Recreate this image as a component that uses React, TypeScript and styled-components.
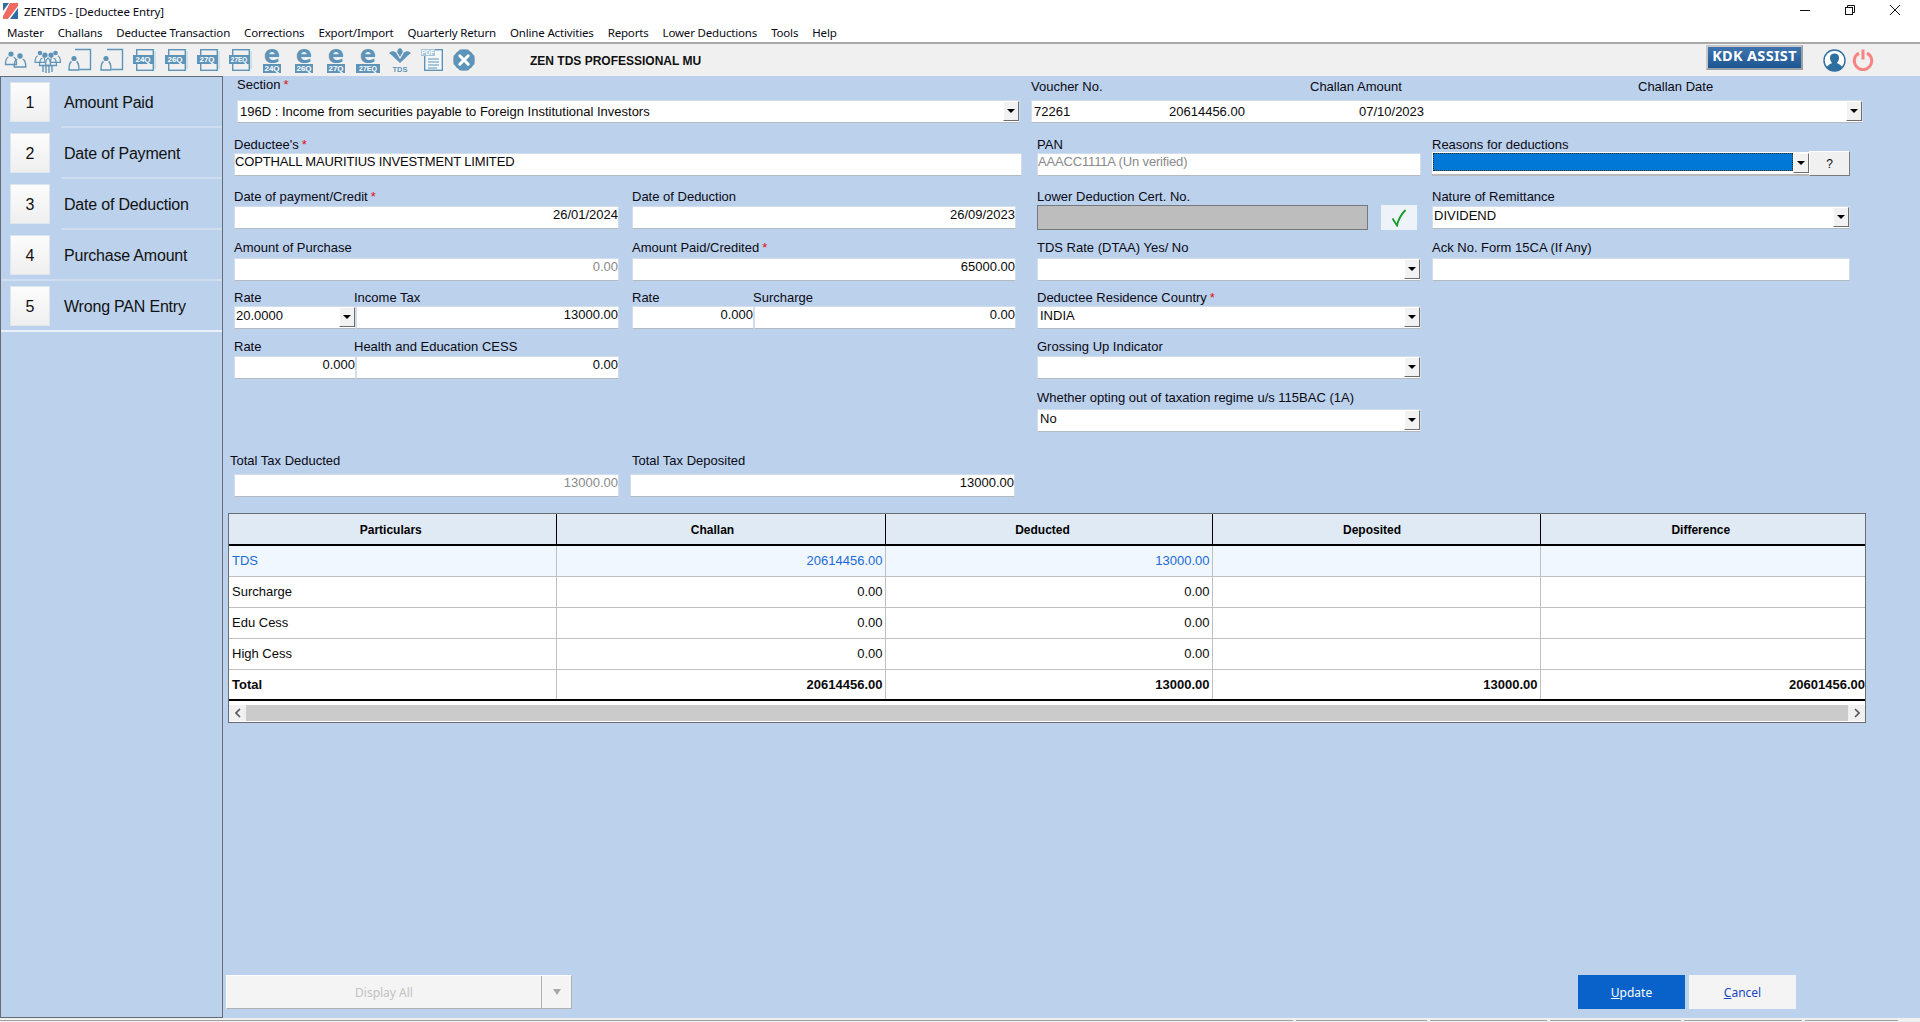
import React from "react";
import styled, { createGlobalStyle } from "styled-components";

const BLUE = "#bcd1ec";
const ICON = "#5f94b9";

const Global = createGlobalStyle`
  html, body { margin: 0; padding: 0; overflow: hidden; background: #f0f0f0; }
  * { box-sizing: border-box; }
`;

const Page = styled.div`
  width: 1920px;
  height: 1022px;
  display: flex;
  flex-direction: column;
  overflow: hidden;
  background: #fff;
  font-family: "Liberation Sans", Arial, sans-serif;
  font-size: 13px;
  color: #0a0a14;
`;

const TitleBar = styled.div`
  height: 22px;
  display: flex;
  align-items: center;
  padding-left: 3px;
  font-family: "Noto Sans", sans-serif;
  font-size: 11.5px;
  letter-spacing: -0.12px;
`;
const TitleText = styled.span`
  margin-left: 6px;
  flex: 1;
`;
const WinControls = styled.div`
  display: flex;
  align-items: center;
  gap: 35px;
  padding: 0 20px 0 0;
  margin-top: -2px;
`;

const MenuBar = styled.nav`
  height: 22px;
  display: flex;
  align-items: center;
  gap: 14px;
  padding: 1px 0 1px 7px;
  border-bottom: 2px solid #a9a9a9;
  font-family: "Noto Sans", sans-serif;
  font-size: 11.5px;
  letter-spacing: -0.17px;
`;

const Toolbar = styled.div`
  height: 32px;
  display: flex;
  align-items: center;
  background: #f0f0f0;
`;
const ToolIcon = styled.div`
  width: 32px;
  height: 32px;
  flex: none;
  display: flex;
  align-items: center;
  justify-content: center;
`;
const Company = styled.div`
  margin-left: 50px;
  padding-top: 2px;
  font-weight: bold;
  font-size: 12px;
  flex: 1;
  color: #111;
`;
const Assist = styled.div`
  width: 97px;
  height: 25px;
  display: flex;
  align-items: center;
  justify-content: center;
  background: linear-gradient(#3f74ae, #1c5692);
  border: 2px solid #9aa0a6;
  border-top-color: #c8c8c8;
  border-left-color: #c8c8c8;
  color: #fff;
  font-weight: bold;
  font-size: 14.5px;
  font-family: "Noto Sans", sans-serif;
  letter-spacing: 0.3px;
  margin: -5px 20px 0 0;
  padding-bottom: 5px;
`;
const ToolRight = styled.div`
  display: flex;
  align-items: center;
  gap: 6px;
  padding-right: 46px;
`;

const Workspace = styled.div`
  flex: 1;
  min-height: 0;
  display: flex;
  background: ${BLUE};
`;

const Sidebar = styled.aside`
  width: 223px;
  flex: none;
  border: 1px solid #666c74;
`;
const SideItem = styled.div<{ $kind: "inset" | "full" | "last" }>`
  height: 51px;
  display: flex;
  align-items: center;
  padding: 5px 0 6px 9px;
  gap: 14px;
  position: relative;
  &::after {
    content: "";
    position: absolute;
    left: ${(p) => (p.$kind === "inset" ? "60px" : "0")};
    right: 0;
    bottom: 0;
    height: 2px;
    background: ${(p) => (p.$kind === "last" ? "#eaf1fa" : "#cfddf0")};
  }
`;
const SideNum = styled.div`
  width: 40px;
  height: 40px;
  display: flex;
  align-items: center;
  justify-content: center;
  padding-top: 1px;
  background: linear-gradient(#fcfcfc, #efefef);
  border: 1px solid #dfe5ec;
  font-size: 16px;
  color: #111;
`;
const SideLabel = styled.div`
  font-size: 16px;
  padding-top: 2px;
  letter-spacing: -0.2px;
  color: #111;
`;

const Main = styled.main`
  flex: 1;
  min-width: 0;
  display: flex;
  flex-direction: column;
`;
const Row = styled.div<{ $h: number; $gap: number; $ml?: number }>`
  --label-gap: ${(p) => p.$gap}px;
  height: ${(p) => p.$h}px;
  display: flex;
  align-items: flex-end;
  margin-left: ${(p) => p.$ml ?? 11}px;
`;
const Field = styled.div<{ $w: number; $ml?: number }>`
  width: ${(p) => p.$w}px;
  margin-left: ${(p) => p.$ml ?? 0}px;
  flex: none;
`;
const Label = styled.div<{ $dx?: number; $gap?: number }>`
  height: 14px;
  line-height: 14px;
  margin-bottom: ${(p) => (p.$gap !== undefined ? `${p.$gap}px` : "var(--label-gap)")};
  margin-left: ${(p) => p.$dx ?? 0}px;
  white-space: nowrap;
`;
const LabelRow = styled.div`
  display: flex;
  height: 14px;
  line-height: 14px;
  margin-bottom: 6px;
`;
const LabelCell = styled.span<{ $w: number }>`
  width: ${(p) => p.$w}px;
  flex: none;
`;
const Star = styled.span`
  color: #e01010;
  margin-left: 3px;
`;
const Box = styled.div<{ $align?: string }>`
  height: 23px;
  display: flex;
  align-items: flex-start;
  background: #fff;
  border: 1px solid #d2dcea;
  border-bottom-color: #b4bac2;
  justify-content: ${(p) => (p.$align === "right" ? "flex-end" : "flex-start")};
`;
const BoxText = styled.span<{ $top?: number; $muted?: boolean; $left?: number; $w?: number; $tight?: boolean }>`
  line-height: 14px;
  padding-top: ${(p) => p.$top ?? 1}px;
  padding-left: ${(p) => p.$left ?? 1}px;
  white-space: nowrap;
  letter-spacing: ${(p) => (p.$tight ? "-0.16px" : "normal")};
  color: ${(p) => (p.$muted ? "#8a8a8a" : "#0a0a0a")};
  flex: none;
  width: ${(p) => (p.$w ? `${p.$w}px` : "auto")};
`;
const DropBtn = styled.div`
  width: 16px;
  height: 20px;
  flex: none;
  margin-left: auto;
  display: flex;
  align-items: center;
  justify-content: center;
  background: #f2f2f2;
  border: 1px solid #fff;
  border-right-color: #6e6e6e;
  border-bottom-color: #6e6e6e;
  &::before {
    content: "";
    border-left: 4px solid transparent;
    border-right: 4px solid transparent;
    border-top: 4px solid #000;
  }
`;
const ReasonWrap = styled.div`
  display: flex;
`;
const ReasonBox = styled.div`
  width: 377px;
  height: 24px;
  display: flex;
  align-items: flex-start;
  background: #fff;
  padding: 1px 0 0 1px;
  border-bottom: 2px solid #b9b9b9;
`;
const ReasonSel = styled.div`
  flex: 1;
  height: 18px;
  background: #0078d7;
  border: 1px dotted #3a2a10;
`;
const HelpBtn = styled.div`
  width: 41px;
  height: 25px;
  display: flex;
  align-items: center;
  justify-content: center;
  background: #f0f0f0;
  border: 1px solid #fff;
  border-right-color: #7a7a7a;
  border-bottom-color: #7a7a7a;
  font-size: 12px;
  margin-top: -1px;
`;
const CertRow = styled.div`
  display: flex;
  gap: 13px;
  margin-bottom: -1px;
`;
const CertInput = styled.div`
  width: 331px;
  height: 25px;
  background: #bdbdbd;
  border: 1px solid #75787c;
`;
const CheckBtn = styled.div`
  width: 36px;
  height: 25px;
  display: flex;
  align-items: center;
  justify-content: center;
  background: #eef3f9;
`;

const GridWrap = styled.div`
  width: 1638px;
  height: 210px;
  margin: 16px 0 0 5px;
  background: #fff;
  border: 1px solid #6a6e72;
  overflow: hidden;
`;
const Table = styled.table`
  width: 1636px;
  table-layout: fixed;
  border-collapse: collapse;
  font-size: 13px;
`;
const Th = styled.th<{ $pr: number }>`
  height: 31px;
  padding: 2px ${(p) => p.$pr}px 0 0;
  background: #e0eaf4;
  font-weight: bold;
  font-size: 12px;
  border-right: 1px solid #000;
  border-bottom: 2px solid #000;
  color: #000;
  &:last-child { border-right: none; }
`;
const Td = styled.td<{ $right?: boolean; $blue?: boolean; $bold?: boolean; $total?: boolean }>`
  height: 31px;
  padding: ${(p) => (p.$total ? "1px" : "0")} 2px 0 3px;
  text-align: ${(p) => (p.$right ? "right" : "left")};
  background: ${(p) => (p.$blue ? "#f0f7fe" : "#fff")};
  color: ${(p) => (p.$blue ? "#1b6bd6" : "#0a0a0a")};
  font-weight: ${(p) => (p.$bold ? "bold" : "normal")};
  white-space: nowrap;
  border-right: 1px solid #c0c0c0;
  border-bottom: ${(p) => (p.$total ? "2px solid #000" : "1px solid #c0c0c0")};
  &:last-child { border-right: none; padding-right: 0; }
`;
const Scroll = styled.div`
  height: 16px;
  margin-top: 4px;
  display: flex;
`;
const ScrollBtn = styled.div`
  width: 17px;
  flex: none;
  background: #f0f0f0;
  display: flex;
  align-items: center;
  justify-content: center;
`;
const ScrollTrack = styled.div`
  flex: 1;
  background: #cbcbcb;
`;

const Footer = styled.div`
  margin-top: auto;
  display: flex;
  height: 34px;
  margin-bottom: 9px;
  padding: 0 124px 0 3px;
  gap: 4px;
`;
const SplitBtn = styled.div`
  width: 346px;
  display: flex;
  background: #f4f4f4;
  border: 1px solid #fff;
  border-right-color: #b0b0b0;
  border-bottom: 1px solid #b0b0b0;
  color: #c2c2c2;
  font-family: "Noto Sans", sans-serif;
  font-size: 12px;
  margin-right: auto;
`;
const SplitMain = styled.div`
  flex: 1;
  display: flex;
  align-items: center;
  justify-content: center;
  border-right: 1px solid #b0b0b0;
`;
const SplitArrow = styled.div`
  width: 29px;
  display: flex;
  align-items: center;
  justify-content: center;
  &::before {
    content: "";
    border-left: 4px solid transparent;
    border-right: 4px solid transparent;
    border-top: 6px solid #a8a8a8;
  }
`;
const ActionBtn = styled.div<{ $primary?: boolean }>`
  width: 107px;
  display: flex;
  align-items: center;
  justify-content: center;
  background: ${(p) => (p.$primary ? "#0862c9" : "#f4f4f4")};
  color: ${(p) => (p.$primary ? "#fff" : "#1a47c4")};
  font-family: "Noto Sans", sans-serif;
  font-size: 12px;
`;
const Under = styled.span`
  text-decoration: underline;
`;

const StatusBar = styled.div`
  height: 4px;
  display: flex;
  gap: 3px;
  padding: 2px 20px 0 0;
  background: #f0f0f0;
`;
const StatusSeg = styled.div<{ $w: number }>`
  width: ${(p) => p.$w}px;
  flex: none;
  border-top: 1.5px solid #a2a2a2;
`;

/* ---------- drawings ---------- */
const Logo = () => (
  <svg width="15" height="16" viewBox="0 0 15 16">
    <rect width="15" height="16" fill="#fff" />
    <path d="M0 0H6L0 8Z" fill="#2f6ca3" />
    <path d="M7 0H15V3L5 16H0V13Z" fill="#ee6a62" />
    <path d="M15 5V16H7Z" fill="#2f6ca3" />
  </svg>
);
const WinMin = () => (
  <svg width="10" height="10" viewBox="0 0 10 10"><path d="M0 5.5H10" stroke="#111" strokeWidth="1" /></svg>
);
const WinRestore = () => (
  <svg width="10" height="10" viewBox="0 0 10 10" fill="none" stroke="#111">
    <rect x="0.5" y="2.5" width="7" height="7" />
    <path d="M2.5 2.5V0.5H9.5V7.5H7.5" />
  </svg>
);
const WinClose = () => (
  <svg width="10" height="10" viewBox="0 0 10 10" stroke="#111"><path d="M0 0L10 10M10 0L0 10" /></svg>
);

const PersonOutline = ({ x, y, s = 1 }: { x: number; y: number; s?: number }) => (
  <g transform={`translate(${x} ${y}) scale(${s})`}>
    <circle cx="0" cy="0" r="2.6" fill={ICON} />
    <path d="M-2.6 3C-5 4 -5.5 6 -5.5 10.5H5.5C5.5 6 5 4 2.6 3" fill="none" stroke={ICON} strokeWidth="1.3" />
  </g>
);
const TwoPeople = () => (
  <svg width="26" height="24" viewBox="0 0 26 24">
    <PersonOutline x={8} y={6} />
    <PersonOutline x={17} y={8} s={1.05} />
  </svg>
);
const FourPeople = () => (
  <svg width="28" height="28" viewBox="0 0 28 28">
    <PersonOutline x={6} y={7} s={0.9} />
    <PersonOutline x={21.5} y={7} s={0.9} />
    <PersonOutline x={11} y={9} s={1} />
    <PersonOutline x={17} y={9} s={1} />
    <path d="M9 20V26M12 20V27M15 20V27M18 20V26" stroke={ICON} strokeWidth="1.4" />
  </svg>
);
const DocPerson = () => (
  <svg width="24" height="24" viewBox="0 0 24 24" fill="none">
    <path d="M7 1.5H22.5V21.5H12" stroke={ICON} strokeWidth="1.4" />
    <circle cx="6" cy="10.5" r="2.6" fill={ICON} />
    <path d="M3.5 13.5C1.5 14.5 1 16.5 1 22H11C11 16.5 10.5 14.5 8.5 13.5" stroke={ICON} strokeWidth="1.4" />
  </svg>
);
const Tag = ({ x, y, w, h, t, fs }: { x: number; y: number; w: number; h: number; t: string; fs: number }) => (
  <>
    <rect x={x} y={y} width={w} height={h} fill={ICON} />
    <text x={x + w / 2} y={y + h - 1.6} textAnchor="middle" fontSize={fs} fill="#fff" fontFamily="Liberation Sans" fontWeight="bold">
      {t}
    </text>
  </>
);
const DocTag = ({ t }: { t: string }) => (
  <svg width="24" height="24" viewBox="0 0 24 24" fill="none">
    <rect x="4.7" y="1.7" width="16.6" height="20.6" fill="#f0f0f0" stroke={ICON} strokeWidth="1.4" />
    <rect x="22" y="3" width="2" height="18" fill="#cfe0ec" />
    <Tag x={1} y={7} w={20} h={9} t={t} fs={t.length > 3 ? 6.4 : 8} />
  </svg>
);
const EIcon = ({ t }: { t: string }) => (
  <svg width={t.length > 3 ? 24 : 22} height="27" viewBox={t.length > 3 ? "0 0 24 27" : "0 0 22 27"}>
    <text x={t.length > 3 ? 12 : 11} y="16" textAnchor="middle" fontSize="24" fontWeight="bold" fill={ICON} fontFamily="DejaVu Sans">
      e
    </text>
    <Tag x={t.length > 3 ? 0 : 2} y={17} w={t.length > 3 ? 24 : 18} h={9} t={t} fs={t.length > 3 ? 7 : 8} />
  </svg>
);
const TdsIcon = () => (
  <svg width="24" height="26" viewBox="0 0 24 26">
    <path d="M12 16L3.5 8L1 6C4 3 8 4 10 8L11 10C9 6 8 3 12 1C16 3 15 6 13 10L14 8C16 4 20 3 23 6L20.5 8Z" fill={ICON} />
    <path d="M9 6L12 11L15 6" stroke="#f0f0f0" strokeWidth="1.2" fill="none" />
    <text x="12" y="25" textAnchor="middle" fontSize="7.5" fontWeight="bold" fill={ICON} fontFamily="Liberation Sans">TDS</text>
  </svg>
);
const PdfIcon = () => (
  <svg width="24" height="24" viewBox="0 0 24 24" fill="none">
    <rect x="4.7" y="1.7" width="17.6" height="20.6" fill="#f4f8fb" stroke={ICON} strokeWidth="1.4" />
    <rect x="1" y="1" width="14" height="7" fill="#a5c3d9" />
    <text x="8" y="7" textAnchor="middle" fontSize="6.4" fontWeight="bold" fill="#fff" fontFamily="Liberation Sans">PDF</text>
    <path d="M8 11H19M8 14H19M8 17H19M8 20H17" stroke={ICON} strokeWidth="1" />
  </svg>
);
const CloseIcon = () => (
  <svg width="22" height="22" viewBox="0 0 22 22">
    <path d="M7 0.5H15L21.5 7V15L15 21.5H7L0.5 15V7Z" fill={ICON} />
    <circle cx="11" cy="11" r="10.5" fill={ICON} />
    <path d="M6.8 6.8L15.2 15.2M15.2 6.8L6.8 15.2" stroke="#fff" strokeWidth="3" strokeLinecap="round" />
  </svg>
);
const UserIcon = () => (
  <svg width="23" height="23" viewBox="0 0 23 23">
    <circle cx="11.5" cy="11.5" r="10.5" fill="#fff" stroke="#2d6f9f" strokeWidth="1.4" />
    <path d="M3.5 18.5C5 15.5 8 15 9 14C7.5 12 7 10.5 7 8.5C7 6 9 4.5 11.5 4.5S16 6 16 8.5C16 10.5 15.5 12 14 14C15 15 18 15.5 19.5 18.5C17 21 14 22 11.5 22S6 21 3.5 18.5Z" fill="#2d6f9f" />
  </svg>
);
const PowerIcon = () => (
  <svg width="22" height="22" viewBox="0 0 22 22" fill="none" stroke="#fb8282" strokeWidth="3">
    <path d="M7 4.2A8.7 8.7 0 1 0 15 4.2" />
    <path d="M11 0.5V10.5" />
  </svg>
);
const Check = () => (
  <svg width="16" height="18" viewBox="0 0 16 18" fill="none">
    <path d="M1.5 9.5L6 16.5C7.5 10 10.5 5 14.5 1" stroke="#159a2b" strokeWidth="1.8" />
  </svg>
);
const Chevron = ({ dir }: { dir: "l" | "r" }) => (
  <svg width="6" height="10" viewBox="0 0 6 10" fill="none" stroke="#555" strokeWidth="1.6">
    <path d={dir === "l" ? "M5 1L1 5L5 9" : "M1 1L5 5L1 9"} />
  </svg>
);

const MENU = ["Master", "Challans", "Deductee Transaction", "Corrections", "Export/Import", "Quarterly Return", "Online Activities", "Reports", "Lower Deductions", "Tools", "Help"];
const SIDE = ["Amount Paid", "Date of Payment", "Date of Deduction", "Purchase Amount", "Wrong PAN Entry"];
const STATUS = [1293, 131, 117, 131, 118, 93];
const HEADERS: [string, number][] = [
  ["Particulars", 3],
  ["Challan", 16],
  ["Deducted", 12],
  ["Deposited", 8],
  ["Difference", 4],
];

const ROWS: { name: string; values: string[]; blue?: boolean; bold?: boolean; total?: boolean }[] = [
  { name: "TDS", values: ["20614456.00", "13000.00", "", ""], blue: true },
  { name: "Surcharge", values: ["0.00", "0.00", "", ""] },
  { name: "Edu Cess", values: ["0.00", "0.00", "", ""] },
  { name: "High Cess", values: ["0.00", "0.00", "", ""] },
  { name: "Total", values: ["20614456.00", "13000.00", "13000.00", "20601456.00"], bold: true, total: true },
];

export default function App() {
  return (
    <Page>
      <Global />
      <TitleBar>
        <Logo />
        <TitleText>ZENTDS - [Deductee Entry]</TitleText>
        <WinControls>
          <WinMin />
          <WinRestore />
          <WinClose />
        </WinControls>
      </TitleBar>
      <MenuBar>
        {MENU.map((m) => (
          <span key={m}>{m}</span>
        ))}
      </MenuBar>
      <Toolbar>
        <ToolIcon><TwoPeople /></ToolIcon>
        <ToolIcon><FourPeople /></ToolIcon>
        <ToolIcon><DocPerson /></ToolIcon>
        <ToolIcon><DocPerson /></ToolIcon>
        {["24Q", "26Q", "27Q", "27EQ"].map((t) => (
          <ToolIcon key={t}><DocTag t={t} /></ToolIcon>
        ))}
        {["24Q", "26Q", "27Q", "27EQ"].map((t) => (
          <ToolIcon key={"e" + t}><EIcon t={t} /></ToolIcon>
        ))}
        <ToolIcon><TdsIcon /></ToolIcon>
        <ToolIcon><PdfIcon /></ToolIcon>
        <ToolIcon><CloseIcon /></ToolIcon>
        <Company>ZEN TDS PROFESSIONAL MU</Company>
        <Assist>KDK ASSIST</Assist>
        <ToolRight>
          <UserIcon />
          <PowerIcon />
        </ToolRight>
      </Toolbar>

      <Workspace>
        <Sidebar>
          {SIDE.map((s, i) => (
            <SideItem key={s} $kind={i === 4 ? "last" : i === 3 ? "full" : "inset"}>
              <SideNum>{i + 1}</SideNum>
              <SideLabel>{s}</SideLabel>
            </SideItem>
          ))}
        </Sidebar>
        <Main>
          <Row $h={47} $gap={8}>
            <Field $w={783} $ml={3}>
              <Label>Section<Star>*</Star></Label>
              <Box>
                <BoxText $top={4} $left={2}>196D : Income from securities payable to Foreign Institutional Investors</BoxText>
                <DropBtn />
              </Box>
            </Field>
            <Field $w={832} $ml={11}>
              <LabelRow>
                <LabelCell $w={279}>Voucher No.</LabelCell>
                <LabelCell $w={328}>Challan Amount</LabelCell>
                <LabelCell $w={100}>Challan Date</LabelCell>
              </LabelRow>
              <Box>
                <BoxText $top={4} $left={2} $w={137}>72261</BoxText>
                <BoxText $top={4} $left={0} $w={190}>20614456.00</BoxText>
                <BoxText $top={4} $left={0}>07/10/2023</BoxText>
                <DropBtn />
              </Box>
            </Field>
          </Row>

          <Row $h={53} $gap={1}>
            <Field $w={788}>
              <Label>Deductee's<Star>*</Star></Label>
              <Box><BoxText $left={0} $tight>COPTHALL MAURITIUS INVESTMENT LIMITED</BoxText></Box>
            </Field>
            <Field $w={384} $ml={15}>
              <Label>PAN</Label>
              <Box><BoxText $left={0} $muted $tight>AAACC1111A (Un verified)</BoxText></Box>
            </Field>
            <Field $w={418} $ml={11}>
              <Label $gap={0}>Reasons for deductions</Label>
              <ReasonWrap>
                <ReasonBox><ReasonSel /><DropBtn /></ReasonBox>
                <HelpBtn>?</HelpBtn>
              </ReasonWrap>
            </Field>
          </Row>

          <Row $h={53} $gap={2}>
            <Field $w={385}>
              <Label>Date of payment/Credit<Star>*</Star></Label>
              <Box $align="right"><BoxText>26/01/2024</BoxText></Box>
            </Field>
            <Field $w={384} $ml={13}>
              <Label>Date of Deduction</Label>
              <Box $align="right"><BoxText>26/09/2023</BoxText></Box>
            </Field>
            <Field $w={380} $ml={21}>
              <Label $gap={1}>Lower Deduction Cert. No.</Label>
              <CertRow>
                <CertInput />
                <CheckBtn><Check /></CheckBtn>
              </CertRow>
            </Field>
            <Field $w={418} $ml={15}>
              <Label>Nature of Remittance</Label>
              <Box>
                <BoxText $top={2}>DIVIDEND</BoxText>
                <DropBtn />
              </Box>
            </Field>
          </Row>

          <Row $h={52} $gap={3}>
            <Field $w={385}>
              <Label>Amount of Purchase</Label>
              <Box $align="right"><BoxText $muted>0.00</BoxText></Box>
            </Field>
            <Field $w={384} $ml={13}>
              <Label>Amount Paid/Credited<Star>*</Star></Label>
              <Box $align="right"><BoxText>65000.00</BoxText></Box>
            </Field>
            <Field $w={384} $ml={21}>
              <Label>TDS Rate (DTAA) Yes/ No</Label>
              <Box><DropBtn /></Box>
            </Field>
            <Field $w={418} $ml={11}>
              <Label>Ack No. Form 15CA (If Any)</Label>
              <Box />
            </Field>
          </Row>

          <Row $h={48} $gap={1}>
            <Field $w={122}>
              <Label>Rate</Label>
              <Box>
                <BoxText $top={2}>20.0000</BoxText>
                <DropBtn />
              </Box>
            </Field>
            <Field $w={263}>
              <Label $dx={-2}>Income Tax</Label>
              <Box $align="right"><BoxText>13000.00</BoxText></Box>
            </Field>
            <Field $w={122} $ml={13}>
              <Label>Rate</Label>
              <Box $align="right"><BoxText>0.000</BoxText></Box>
            </Field>
            <Field $w={262}>
              <Label $dx={-1}>Surcharge</Label>
              <Box $align="right"><BoxText>0.00</BoxText></Box>
            </Field>
            <Field $w={384} $ml={21}>
              <Label>Deductee Residence Country<Star>*</Star></Label>
              <Box>
                <BoxText $top={2} $left={2}>INDIA</BoxText>
                <DropBtn />
              </Box>
            </Field>
          </Row>

          <Row $h={50} $gap={2}>
            <Field $w={122}>
              <Label>Rate</Label>
              <Box $align="right"><BoxText>0.000</BoxText></Box>
            </Field>
            <Field $w={263}>
              <Label $dx={-2}>Health and Education CESS</Label>
              <Box $align="right"><BoxText>0.00</BoxText></Box>
            </Field>
            <Field $w={384} $ml={418}>
              <Label>Grossing Up Indicator</Label>
              <Box><DropBtn /></Box>
            </Field>
          </Row>

          <Row $h={53} $gap={4} $ml={814}>
            <Field $w={384}>
              <Label>Whether opting out of taxation regime u/s 115BAC (1A)</Label>
              <Box>
                <BoxText $top={2} $left={2}>No</BoxText>
                <DropBtn />
              </Box>
            </Field>
          </Row>

          <Row $h={65} $gap={6}>
            <Field $w={385}>
              <Label $dx={-4}>Total Tax Deducted</Label>
              <Box $align="right"><BoxText $muted>13000.00</BoxText></Box>
            </Field>
            <Field $w={385} $ml={11}>
              <Label $dx={2}>Total Tax Deposited</Label>
              <Box $align="right"><BoxText>13000.00</BoxText></Box>
            </Field>
          </Row>

          <GridWrap>
            <Table>
              <colgroup>
                <col width={327} />
                <col width={329} />
                <col width={327} />
                <col width={328} />
                <col width={325} />
              </colgroup>
              <thead>
                <tr>
                  {HEADERS.map(([h, pr]) => (
                    <Th key={h} $pr={pr}>{h}</Th>
                  ))}
                </tr>
              </thead>
              <tbody>
                {ROWS.map((r) => (
                  <tr key={r.name}>
                    <Td $blue={r.blue} $bold={r.bold} $total={r.total}>{r.name}</Td>
                    {r.values.map((v, i) => (
                      <Td key={i} $right $blue={r.blue} $bold={r.bold} $total={r.total}>{v}</Td>
                    ))}
                  </tr>
                ))}
              </tbody>
            </Table>
            <Scroll>
              <ScrollBtn><Chevron dir="l" /></ScrollBtn>
              <ScrollTrack />
              <ScrollBtn><Chevron dir="r" /></ScrollBtn>
            </Scroll>
          </GridWrap>

          <Footer>
            <SplitBtn>
              <SplitMain>Display All</SplitMain>
              <SplitArrow />
            </SplitBtn>
            <ActionBtn $primary><span><Under>U</Under>pdate</span></ActionBtn>
            <ActionBtn><span><Under>C</Under>ancel</span></ActionBtn>
          </Footer>
        </Main>
      </Workspace>

      <StatusBar>
        {STATUS.map((w, i) => (
          <StatusSeg key={i} $w={w} />
        ))}
      </StatusBar>
    </Page>
  );
}
